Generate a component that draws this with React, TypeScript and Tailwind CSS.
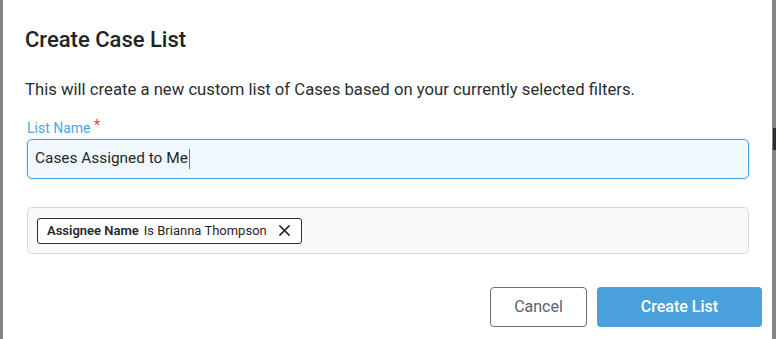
import * as React from "react";

export default function App() {
  return (
    <div className="h-[339px] w-[776px] overflow-hidden bg-[#858585] pl-[3px] font-['Roboto',sans-serif]">
      <div className="relative h-[339px] w-[769px] bg-white">
        <div className="px-[22px] pt-[27px]">
          <h1 className="text-[22px] font-medium leading-[26px] text-[#222426]">Create Case List</h1>
          <p className="mt-[26px] text-[16.7px] leading-[22px] text-[#2b2d30]">
            This will create a new custom list of Cases based on your currently selected filters.
          </p>

          <div className="mt-[19px] pl-[2px]">
            <label className="block text-[14px] leading-[16px] text-[#4ea5e0]">
              List Name <span className="relative -top-[3px] text-[#e0443a]">*</span>
            </label>
            <div className="mt-[3px] flex h-[40px] w-[722px] items-center rounded-[5px] border border-[#4aa3df] bg-[#f1f8fd] px-[7px] shadow-[0_0_0_1px_rgba(74,163,223,0.15)]">
              <span className="text-[15.4px] text-[#25272b]">Cases Assigned to Me</span>
              <span className="ml-px h-[20px] w-px bg-[#3a7fc0]" />
            </div>

            <div className="mt-[28px] flex h-[47px] w-[722px] items-center rounded-[5px] border border-[#d9d9de] bg-[#fafafb] px-[9px]">
              <div className="flex h-[26px] items-center gap-[5px] rounded-[3px] border border-[#2b2f3a] bg-white pl-[9px] pr-[10px] text-[13px] text-[#25272b]">
                <span className="font-semibold">Assignee Name</span>
                <span>Is Brianna Thompson</span>
                <svg className="ml-[6px]" width="13" height="13" viewBox="0 0 14 14" fill="none" stroke="#25272b" strokeWidth="1.6" strokeLinecap="round">
                  <path d="M2 2L12 12M12 2L2 12" />
                </svg>
              </div>
            </div>
          </div>
        </div>

        <div className="absolute bottom-[12px] right-[10px] flex gap-[10px]">
          <button className="h-[40px] w-[97px] rounded-[4px] border border-[#6b6f78] bg-white text-[16px] text-[#5d616a]">
            Cancel
          </button>
          <button className="h-[40px] w-[165px] rounded-[4px] bg-[#4aa1db] text-[16px] font-medium text-white">
            Create List
          </button>
        </div>
      </div>
      <div className="absolute left-[773px] top-[128px] h-[22px] w-[3px] bg-[#2a2d33]" />
    </div>
  );
}
